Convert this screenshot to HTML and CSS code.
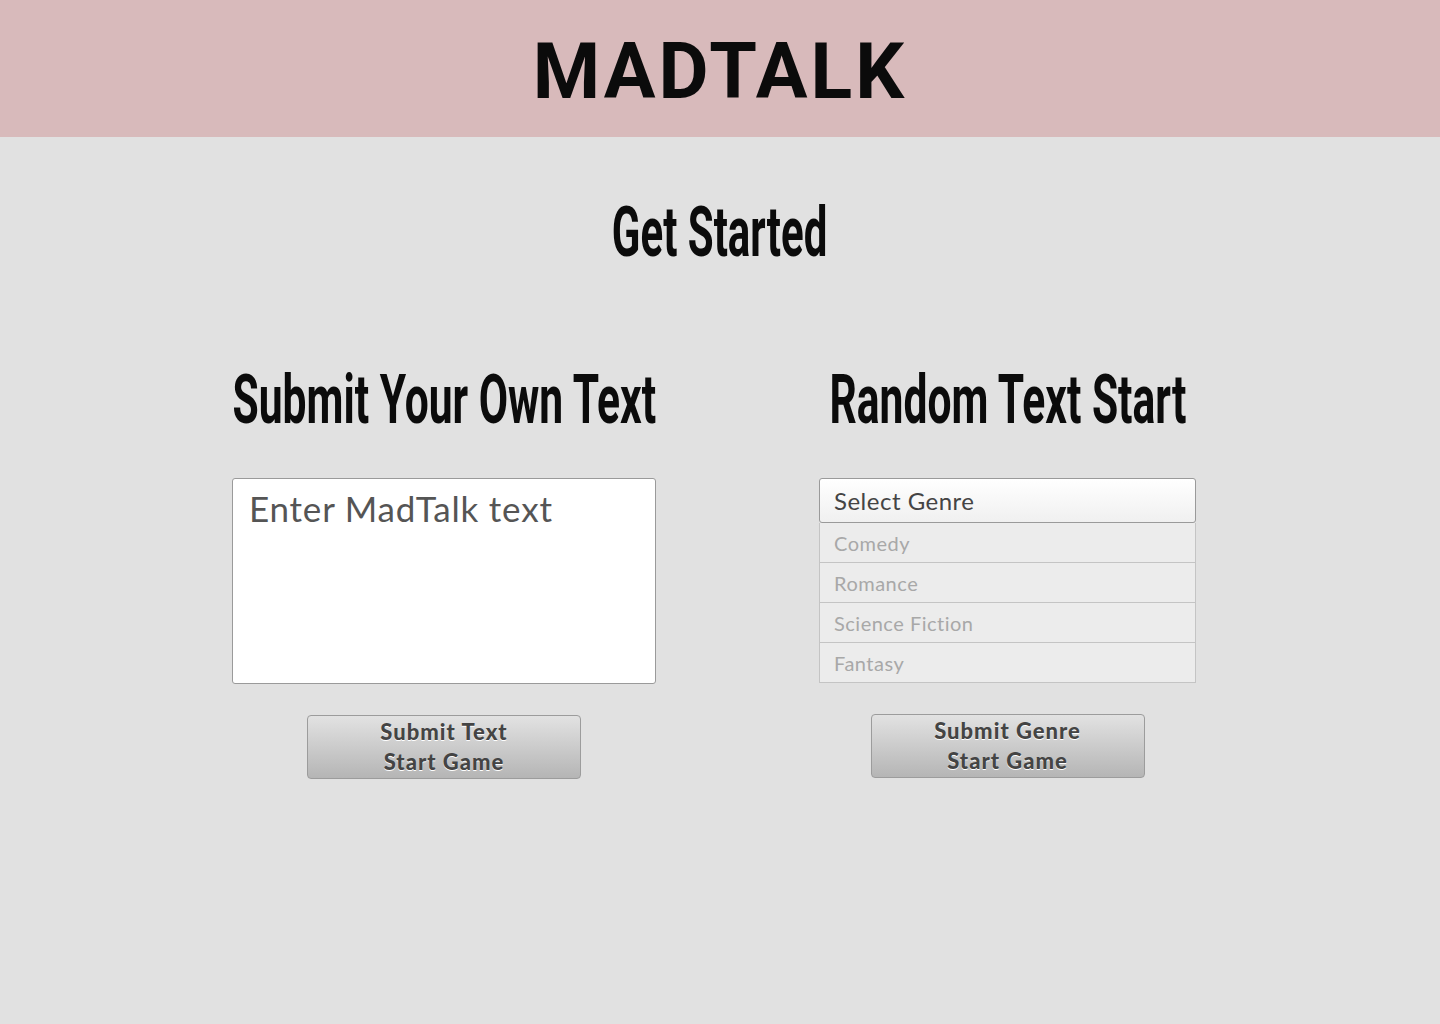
FILE: index.html
```html
<!DOCTYPE html>
<html lang="en">
<head>
<meta charset="utf-8">
<title>MadTalk</title>
<link rel="stylesheet" href="styles.css">
</head>
<body>
<header class="topbar">
  <h1 class="logo">MADTALK</h1>
</header>
<main class="main">
  <h2 class="page-title"><span class="cond">Get Started</span></h2>
  <div class="columns">
    <section class="col col-left">
      <h3 class="col-title"><span class="cond cond-wide">Submit Your Own Text</span></h3>
      <textarea class="text-input" placeholder="Enter MadTalk text"></textarea>
      <button class="btn" type="button">Submit Text<br>Start Game</button>
    </section>
    <section class="col col-right">
      <h3 class="col-title"><span class="cond cond-wide">Random Text Start</span></h3>
      <div class="genre-list">
        <div class="genre-head">Select Genre</div>
        <div class="genre-opt">Comedy</div>
        <div class="genre-opt">Romance</div>
        <div class="genre-opt">Science Fiction</div>
        <div class="genre-opt">Fantasy</div>
      </div>
      <button class="btn" type="button">Submit Genre<br>Start Game</button>
    </section>
  </div>
</main>
</body>
</html>
```
FILE: styles.css
```css
html, body {
  margin: 0;
  padding: 0;
}
body {
  background: #e1e1e1;
  font-family: Lato, "Open Sans", sans-serif;
  min-height: 1024px;
}
.topbar {
  background: #d8babb;
  height: 137px;
  box-sizing: border-box;
  padding-top: 7px;
  display: flex;
  align-items: center;
  justify-content: center;
}
.logo {
  margin: 0;
  font-family: Roboto, sans-serif;
  font-weight: 700;
  font-size: 77px;
  letter-spacing: 3px;
  color: #0b0b0b;
  line-height: 1;
}
.main {
  padding-top: 60px;
}
.page-title {
  margin: 0;
  text-align: center;
  font-family: Roboto, sans-serif;
  font-weight: 700;
  font-size: 70px;
  line-height: 1;
  color: #0b0b0b;
}
.cond {
  display: inline-block;
  transform: scaleX(0.6);
  transform-origin: center;
}
.cond-wide {
  transform: scaleX(0.626);
}
.columns {
  display: flex;
  gap: 163px;
  padding-left: 232px;
  margin-top: 99px;
}
.col {
  display: flex;
  flex-direction: column;
  align-items: center;
}
.col-left { width: 424px; }
.col-right { width: 377px; }
.col-title {
  margin: 0 0 44px;
  white-space: nowrap;
  font-family: Roboto, sans-serif;
  font-weight: 700;
  font-size: 68px;
  line-height: 1;
  color: #0b0b0b;
}
.text-input {
  box-sizing: border-box;
  width: 424px;
  height: 206px;
  border: 1px solid #9a9a9a;
  border-radius: 3px;
  background: #fff;
  resize: none;
  padding: 8px 16px;
  font-family: Lato, sans-serif;
  font-size: 35px;
  letter-spacing: 0.8px;
  color: #555;
  margin: 0;
}
.text-input::placeholder {
  color: #555;
}
.genre-list {
  width: 377px;
  display: flex;
  flex-direction: column;
}
.genre-head {
  box-sizing: border-box;
  height: 45px;
  border: 1px solid #9a9a9a;
  border-radius: 3px;
  background: linear-gradient(#ffffff, #f0f0f0);
  padding: 0 14px;
  display: flex;
  align-items: center;
  font-size: 24px;
  letter-spacing: 0.5px;
  color: #444;
}
.genre-opt {
  box-sizing: border-box;
  height: 40px;
  border: 1px solid #c4c4c4;
  border-top: none;
  background: #ececec;
  padding: 0 14px;
  display: flex;
  align-items: center;
  font-size: 20px;
  letter-spacing: 0.5px;
  color: #a8a8a8;
}
.btn {
  margin-top: 31px;
  box-sizing: border-box;
  width: 274px;
  height: 64px;
  border: 1px solid #9c9c9c;
  border-radius: 4px;
  background: linear-gradient(#e2e2e2, #b5b5b5);
  font-family: Lato, sans-serif;
  font-weight: 900;
  font-size: 22px;
  letter-spacing: 1px;
  line-height: 30px;
  color: #444;
  text-shadow: 0 1px 0 #fff;
  padding: 0;
}
```
